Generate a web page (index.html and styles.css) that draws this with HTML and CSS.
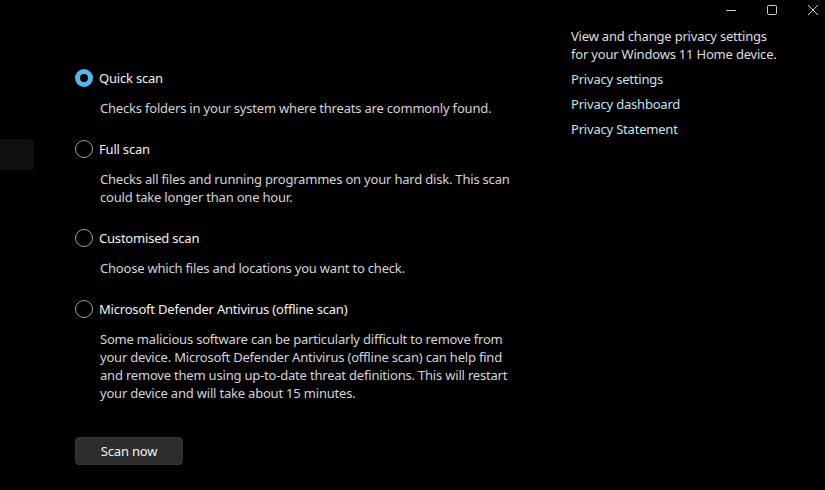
FILE: index.html
```html
<!DOCTYPE html>
<html lang="en">
<head>
    <meta charset="UTF-8">
    <title>Scan options</title>
    <link rel="stylesheet" href="styles.css">
</head>
<body>
    <!-- Title bar -->
    <div class="titlebar">
        <span class="win-btn">
            <svg width="12" height="12" viewBox="0 0 12 12"><path d="M1 6.5h10" stroke="#cfcfcf" stroke-width="1"/></svg>
        </span>
        <span class="win-btn">
            <svg width="12" height="12" viewBox="0 0 12 12"><rect x="1.5" y="1.5" width="9" height="9" rx="1" fill="none" stroke="#cfcfcf" stroke-width="1"/></svg>
        </span>
        <span class="win-btn">
            <svg width="12" height="12" viewBox="0 0 12 12"><path d="M1 1l10 10M11 1L1 11" stroke="#cfcfcf" stroke-width="1"/></svg>
        </span>
    </div>

    <div class="window">
        <!-- Left nav (cut off) -->
        <div class="nav">
            <div class="nav-item"></div>
        </div>

        <!-- Scan options -->
        <div class="main">
            <div class="option">
                <label class="option-row">
                    <span class="radio checked"></span>
                    <span class="option-title">Quick scan</span>
                </label>
                <p class="option-desc">Checks folders in your system where threats are commonly found.</p>
            </div>

            <div class="option">
                <label class="option-row">
                    <span class="radio"></span>
                    <span class="option-title">Full scan</span>
                </label>
                <p class="option-desc">Checks all files and running programmes on your hard disk. This scan could take longer than one hour.</p>
            </div>

            <div class="option">
                <label class="option-row">
                    <span class="radio"></span>
                    <span class="option-title">Customised scan</span>
                </label>
                <p class="option-desc">Choose which files and locations you want to check.</p>
            </div>

            <div class="option">
                <label class="option-row">
                    <span class="radio"></span>
                    <span class="option-title">Microsoft Defender Antivirus (offline scan)</span>
                </label>
                <p class="option-desc">Some malicious software can be particularly difficult to remove from your device. Microsoft Defender Antivirus (offline scan) can help find and remove them using up-to-date threat definitions. This will restart your device and will take about 15 minutes.</p>
            </div>

            <button class="scan-btn">Scan now</button>
        </div>

        <!-- Privacy side panel -->
        <div class="aside">
            <p class="aside-text">View and change privacy settings for your Windows 11 Home device.</p>
            <a class="aside-link" href="#">Privacy settings</a>
            <a class="aside-link" href="#">Privacy dashboard</a>
            <a class="aside-link" href="#">Privacy Statement</a>
        </div>
    </div>
</body>
</html>
```

FILE: styles.css
```css
body {
    margin: 0;
    background-color: #000;
    color: #fff;
    font-family: "Noto Sans", "Open Sans", sans-serif;
    font-size: 13px;
    letter-spacing: -0.2px;
    overflow: hidden;
}

.titlebar {
    height: 20px;
    display: flex;
    justify-content: flex-end;
    margin-right: -8px;
}

.win-btn {
    width: 41px;
    height: 20px;
    display: flex;
    align-items: center;
    justify-content: center;
}

.window {
    display: flex;
}

.nav {
    width: 34px;
    padding-top: 119px;
}

.nav-item {
    height: 31px;
    background-color: #0f0f0f;
    border-radius: 0 3px 3px 0;
}

.main {
    width: 455px;
    margin-left: 41px;
    padding-top: 48px;
}

.option {
    margin-bottom: 22px;
}

.option-row {
    display: flex;
    align-items: center;
    height: 20px;
}

.radio {
    width: 18px;
    height: 18px;
    box-sizing: border-box;
    border: 1px solid #9c9c9c;
    border-radius: 50%;
    margin-right: 6px;
}

.radio.checked {
    border: 5px solid #56b7f0;
    background-color: #000;
}

.option-title {
    color: #f2f2f2;
    line-height: 20px;
}

.option-desc {
    margin: 11px 0 0 25px;
    width: 425px;
    line-height: 18px;
    color: #d4d4d4;
}

.scan-btn {
    margin-top: 13px;
    width: 108px;
    height: 28px;
    background-color: #2d2d2d;
    color: #f2f2f2;
    border: 1px solid #363636;
    border-radius: 4px;
    font-family: inherit;
    font-size: 13px;
    letter-spacing: -0.2px;
}

.aside {
    margin-left: 41px;
    padding-top: 7px;
    width: 212px;
}

.aside-text {
    margin: 0 0 7px;
    line-height: 18px;
    color: #dedede;
}

.aside-link {
    display: block;
    line-height: 18px;
    margin-bottom: 7px;
    color: #c4e3ec;
    text-decoration: none;
}
```
